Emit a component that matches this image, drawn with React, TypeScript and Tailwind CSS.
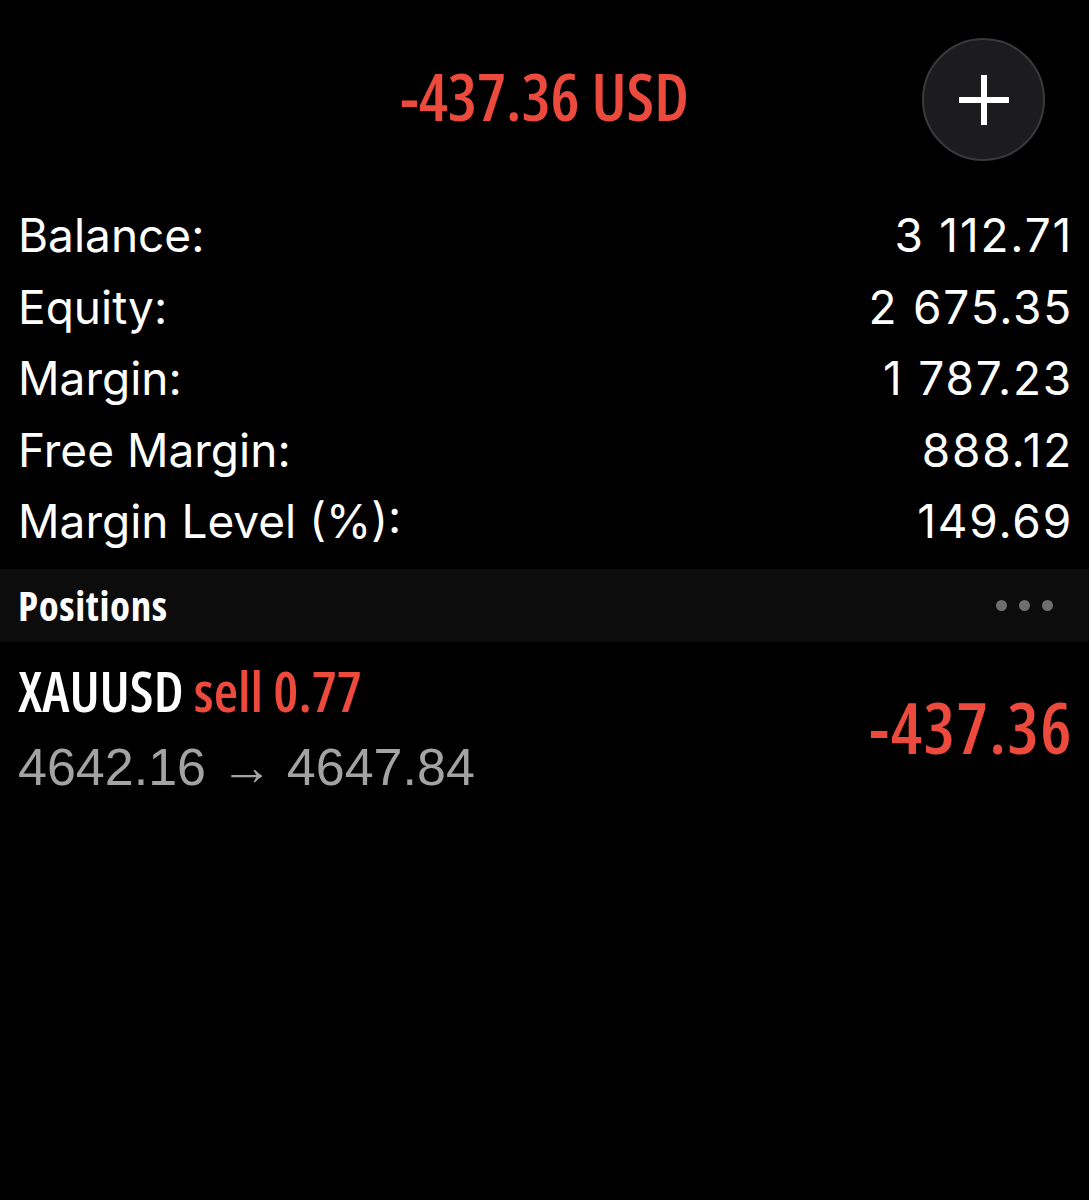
import React from 'react';

const rows = [
  { label: 'Balance:', value: '3 112.71' },
  { label: 'Equity:', value: '2 675.35' },
  { label: 'Margin:', value: '1 787.23' },
  { label: 'Free Margin:', value: '888.12' },
  { label: 'Margin Level (%):', value: '149.69' },
];

export default function App() {
  return (
    <div className="w-[1089px] h-[1200px] bg-black text-white font-['Inter','Noto_Sans',sans-serif]">
      {/* header */}
      <div className="relative h-[200px] flex items-start justify-center pt-[64px]">
        <span className="text-[#ec4a3d] text-[65px] leading-none font-semibold font-['Open_Sans',sans-serif] font-stretch-condensed">
          -437.36 USD
        </span>
        <button className="absolute left-[922px] top-[38px] w-[123px] h-[123px] rounded-full bg-[#1c1c1e] border-2 border-[#3a3a3c] flex items-center justify-center">
          <svg width="54" height="54" viewBox="0 0 54 54">
            <path d="M27 2v50M2 27h50" stroke="white" strokeWidth="6" />
          </svg>
        </button>
      </div>

      {/* account summary */}
      <div className="flex flex-col px-[18px]">
        {rows.map(r => (
          <div key={r.label} className="flex items-center justify-between h-[71.5px] text-[46px]">
            <span>{r.label}</span>
            <span className="tracking-[1.8px] -mr-[2px]">{r.value}</span>
          </div>
        ))}
      </div>

      {/* positions header */}
      <div className="mt-[11px] h-[73px] bg-[#0c0c0c] flex items-center justify-between pl-[18px] pr-[36px]">
        <span className="text-[41px] font-bold leading-none tracking-[0.6px] font-['Open_Sans',sans-serif] font-stretch-condensed">
          Positions
        </span>
        <div className="flex gap-[12px]">
          <span className="w-[11px] h-[11px] rounded-full bg-[#6e6e6e]" />
          <span className="w-[11px] h-[11px] rounded-full bg-[#6e6e6e]" />
          <span className="w-[11px] h-[11px] rounded-full bg-[#6e6e6e]" />
        </div>
      </div>

      {/* position row */}
      <div className="flex items-center justify-between px-[18px] pt-[20px]">
        <div className="flex flex-col">
          <div className="text-[56px] leading-none font-semibold font-['Open_Sans',sans-serif] font-stretch-condensed">
            <span>XAUUSD</span> <span className="text-[#ec4a3d]">sell 0.77</span>
          </div>
          <div className="text-[52px] leading-none mt-[23px] text-[#a3a3a3] font-['Liberation_Sans',Arial,sans-serif]">
            4642.16 → 4647.84
          </div>
        </div>
        <span className="text-[#ec4a3d] text-[70px] leading-none font-semibold tracking-[1.5px] -mr-[2px] font-['Open_Sans',sans-serif] font-stretch-condensed">
          -437.36
        </span>
      </div>
    </div>
  );
}
